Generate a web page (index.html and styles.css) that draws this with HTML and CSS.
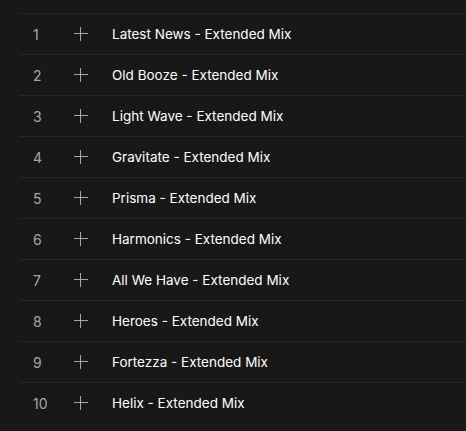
FILE: index.html
```html
<!DOCTYPE html>
<html lang="en">
<head>
  <meta charset="UTF-8">
  <title>Tracklist</title>
  <link rel="stylesheet" href="styles.css">
</head>
<body>
  <div class="tracklist">
    <div class="track"><span class="track-num">1</span><span class="track-add"></span><span class="track-title">Latest News - Extended Mix</span></div>
    <div class="track"><span class="track-num">2</span><span class="track-add"></span><span class="track-title">Old Booze - Extended Mix</span></div>
    <div class="track"><span class="track-num">3</span><span class="track-add"></span><span class="track-title">Light Wave - Extended Mix</span></div>
    <div class="track"><span class="track-num">4</span><span class="track-add"></span><span class="track-title">Gravitate - Extended Mix</span></div>
    <div class="track"><span class="track-num">5</span><span class="track-add"></span><span class="track-title">Prisma - Extended Mix</span></div>
    <div class="track"><span class="track-num">6</span><span class="track-add"></span><span class="track-title">Harmonics - Extended Mix</span></div>
    <div class="track"><span class="track-num">7</span><span class="track-add"></span><span class="track-title">All We Have - Extended Mix</span></div>
    <div class="track"><span class="track-num">8</span><span class="track-add"></span><span class="track-title">Heroes - Extended Mix</span></div>
    <div class="track"><span class="track-num">9</span><span class="track-add"></span><span class="track-title">Fortezza - Extended Mix</span></div>
    <div class="track"><span class="track-num">10</span><span class="track-add"></span><span class="track-title">Helix - Extended Mix</span></div>
  </div>
</body>
</html>
```
FILE: styles.css
```css
body {
  margin: 0;
  background-color: #181818;
  font-family: Inter, "Liberation Sans", Arial, sans-serif;
}
.tracklist {
  padding: 13px 0 0 20px;
}
.track {
  display: flex;
  align-items: center;
  height: 40px;
  border-top: 1px solid #282828;
  padding-left: 13px;
}
.track-num {
  width: 41px;
  color: #a7a7a7;
  font-size: 14px;
}
.track-add {
  position: relative;
  width: 14px;
  height: 14px;
  margin-right: 24px;
}
.track-add::before,
.track-add::after {
  content: "";
  position: absolute;
  background-color: #a7a7a7;
}
.track-add::before {
  left: 0;
  right: 0;
  top: 6px;
  height: 1px;
}
.track-add::after {
  top: 0;
  bottom: 0;
  left: 6px;
  width: 1px;
}
.track-title {
  color: #ffffff;
  font-size: 13.5px;
}
```
